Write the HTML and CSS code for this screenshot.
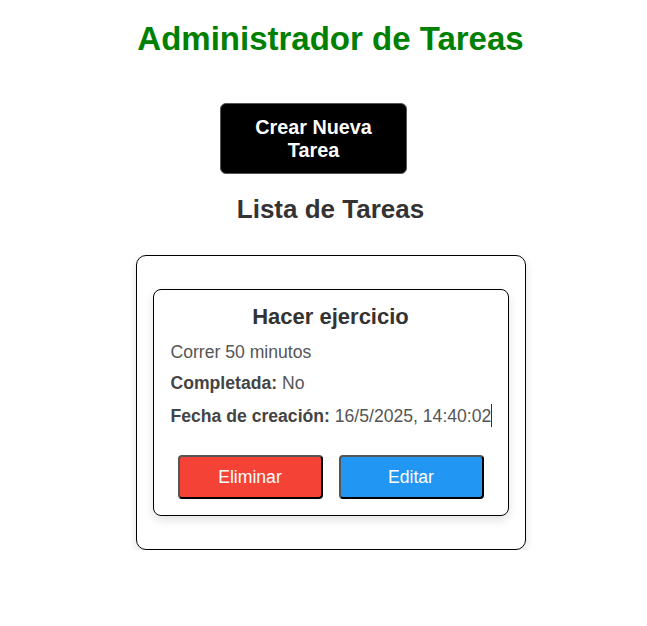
FILE: index.html
```html
<!DOCTYPE html>
<html lang="es">
<head>
<meta charset="utf-8">
<title>Administrador de Tareas</title>
<link rel="stylesheet" href="styles.css">
</head>
<body>
<div class="app">
  <h1 class="title">Administrador de Tareas</h1>
  <button class="create-btn">Crear Nueva Tarea</button>
  <h2 class="list-title">Lista de Tareas</h2>
  <div class="list">
    <div class="card">
      <h3 class="card-title">Hacer ejercicio</h3>
      <p class="card-text">Correr 50 minutos</p>
      <p class="card-text"><strong>Completada:</strong> No</p>
      <p class="card-text nowrap"><strong>Fecha de creación:</strong> 16/5/2025, 14:40:02<span class="caret"></span></p>
      <div class="actions">
        <button class="btn btn-delete">Eliminar</button>
        <button class="btn btn-edit">Editar</button>
      </div>
    </div>
  </div>
</div>
</body>
</html>
```
FILE: styles.css
```css
html, body {
  margin: 0;
  padding: 0;
  background: #fff;
}
body {
  font-family: "Liberation Sans", Arial, sans-serif;
}
.app {
  padding-left: 14px;
  display: flex;
  flex-direction: column;
  align-items: center;
}
.title {
  color: #008000;
  font-size: 33px;
  font-weight: bold;
  margin: 20px 0 0 0;
  line-height: 1.15;
}
.create-btn {
  margin-top: 45px;
  margin-right: 34px;
  width: 187px;
  padding: 12px 20px;
  background: #000;
  color: #fff;
  font-family: "Liberation Sans", Arial, sans-serif;
  font-size: 19.8px;
  font-weight: bold;
  line-height: 1.15;
  border: 1px solid #555;
  border-radius: 6px;
  cursor: pointer;
}
.list-title {
  color: #333;
  font-size: 26px;
  font-weight: bold;
  line-height: 1.15;
  margin: 21px 0 0 0;
}
.list {
  margin-top: 30px;
  width: 390px;
  box-sizing: border-box;
  border: 1px solid #000;
  border-radius: 10px;
  padding: 16px;
  box-shadow: 0 4px 10px rgba(0, 0, 0, 0.12);
}
.card {
  margin: 17px 0;
  border: 1px solid #000;
  border-radius: 8px;
  padding: 14px 17px 16px;
  box-shadow: 0 4px 10px rgba(0, 0, 0, 0.12);
}
.card-title {
  margin: 0 0 12px 0;
  text-align: center;
  color: #333;
  font-size: 22px;
  line-height: 1.15;
}
.card-text {
  margin: 11px 0;
  color: #555;
  font-size: 17.6px;
  line-height: 1.15;
}
.nowrap {
  white-space: nowrap;
}
.card-text strong {
  color: #444;
}
.caret {
  display: inline-block;
  width: 1px;
  height: 23px;
  background: #333;
  vertical-align: -5px;
}
.actions {
  margin-top: 28px;
  display: flex;
  justify-content: center;
  gap: 16px;
}
.btn {
  width: 145px;
  padding: 10px 0;
  font-family: "Liberation Sans", Arial, sans-serif;
  font-size: 17.6px;
  line-height: 1.15;
  color: #fff;
  border: 2px outset #555;
  border-radius: 4px;
  cursor: pointer;
}
.btn-delete {
  background: #f44336;
}
.btn-edit {
  background: #2196f3;
}
```
